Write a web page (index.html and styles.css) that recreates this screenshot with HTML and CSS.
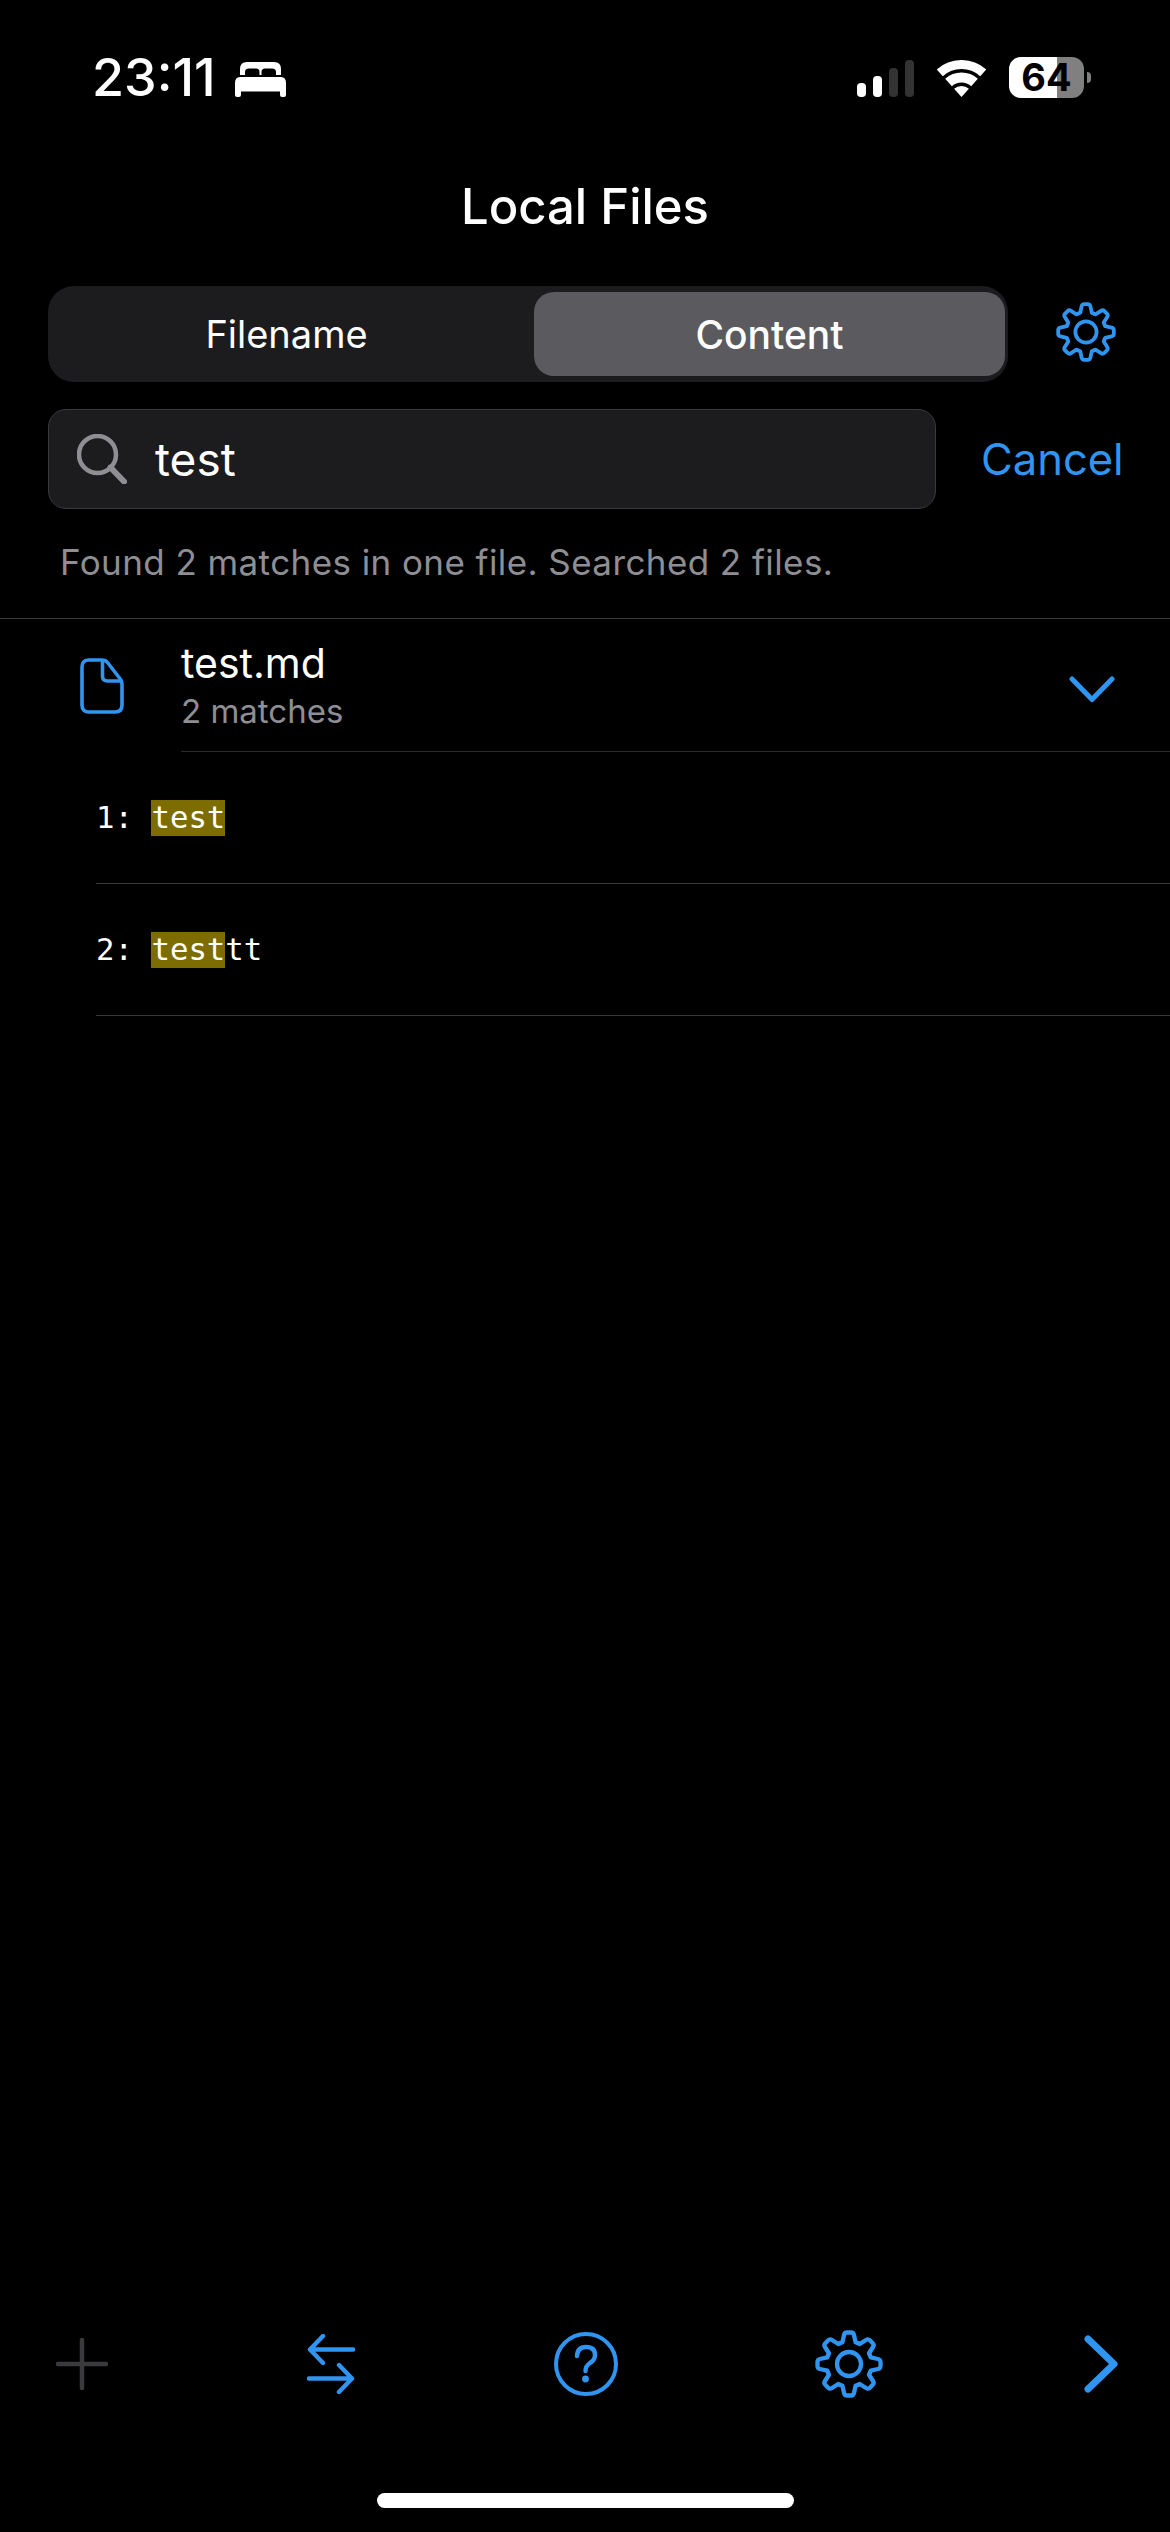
FILE: index.html
```html
<!DOCTYPE html>
<html lang="en">
<head>
  <meta charset="UTF-8">
  <meta name="viewport" content="width=device-width, initial-scale=1.0">
  <title>Local Files</title>
  <link rel="stylesheet" href="styles.css">
</head>
<body>

  <svg class="defs" width="0" height="0">
    <defs>
      <path id="tooth" d="M-7.65-18.48 L-5.8-19.2 L-4.4-25.6 Q-3.9-27.8-1.8-27.8 H1.8 Q3.9-27.8 4.4-25.6 L5.8-19.2 L7.65-18.48"/>
      <symbol id="gear" viewBox="-30 -30 60 60">
        <g fill="none" stroke="#2f95f0" stroke-width="3.8" stroke-linecap="round" stroke-linejoin="round">
          <use href="#tooth"/>
          <use href="#tooth" transform="rotate(45)"/>
          <use href="#tooth" transform="rotate(90)"/>
          <use href="#tooth" transform="rotate(135)"/>
          <use href="#tooth" transform="rotate(180)"/>
          <use href="#tooth" transform="rotate(225)"/>
          <use href="#tooth" transform="rotate(270)"/>
          <use href="#tooth" transform="rotate(315)"/>
          <circle r="10.6"/>
        </g>
      </symbol>
    </defs>
  </svg>

  <div class="page">

    <div class="status-bar">
      <div class="status-left">
        <span class="time">23:11</span>
        <svg class="bed" width="51" height="35" viewBox="0 0 51 35">
          <path fill="#fff" d="M5 13 V7 Q5 0 12 0 H39 Q46 0 46 7 V13 H41 V10 Q41 6.500 37 6.500 H30 Q26.500 6.500 26.500 10 V13 H24.500 V10 Q24.500 6.500 21 6.500 H14 Q10 6.500 10 10 V13 Z"/>
          <path fill="#fff" d="M5 15 H46 Q51 15 51 21 V33 Q51 35 49 35 H47 Q45 35 45 33 V29.500 H6 V33 Q6 35 4 35 H2 Q0 35 0 33 V21 Q0 15 5 15 Z"/>
        </svg>
      </div>
      <div class="status-right">
        <div class="signal">
          <span class="bar bar-1"></span>
          <span class="bar bar-2"></span>
          <span class="bar bar-3 off"></span>
          <span class="bar bar-4 off"></span>
        </div>
        <svg class="wifi" width="49" height="37" viewBox="0 0 49 37">
          <path fill="none" stroke="#fff" stroke-width="9" d="M2.800 12.800 A32.500 32.500 0 0 1 46.200 12.800"/>
          <path fill="none" stroke="#fff" stroke-width="10" d="M11.500 22.500 A19.500 19.500 0 0 1 37.500 22.500"/>
          <path fill="#fff" d="M24.500 37 L17.100 28.800 A11 11 0 0 1 31.900 28.800 Z"/>
        </svg>
        <div class="battery">64</div>
        <span class="battery-nub"></span>
      </div>
    </div>

    <h1 class="title">Local Files</h1>

    <div class="mode-row">
      <div class="segmented">
        <div class="segment">Filename</div>
        <div class="segment active">Content</div>
      </div>
      <svg class="mode-gear" width="60" height="60"><use href="#gear"/></svg>
    </div>

    <div class="search-row">
      <div class="search-field">
        <svg class="search-icon" width="50" height="50" viewBox="0 0 50 50">
          <circle cx="20.500" cy="20.500" r="18.500" fill="none" stroke="#8e8e93" stroke-width="4.500"/>
          <path d="M33.500 33.500 L47 47.500" fill="none" stroke="#8e8e93" stroke-width="6" stroke-linecap="round"/>
        </svg>
        <span class="search-text">test</span>
      </div>
      <span class="cancel">Cancel</span>
    </div>

    <p class="summary">Found 2 matches in one file. Searched 2 files.</p>

    <div class="results">
      <div class="file-row">
        <svg class="file-icon" width="44" height="56" viewBox="0 0 44 56">
          <path fill="none" stroke="#2f95f0" stroke-width="3.600" stroke-linejoin="round" d="M9 2 H22 Q25.500 2 27.500 4.500 L39.500 20 Q42 22.500 42 26 V47 Q42 54 35 54 H9 Q2 54 2 47 V9 Q2 2 9 2 Z"/>
          <path fill="none" stroke="#2f95f0" stroke-width="3.600" stroke-linejoin="round" d="M22.500 2 V18 Q22.500 23 27.500 23 H42"/>
        </svg>
        <div class="file-body">
          <div class="file-text">
            <div class="file-name">test.md</div>
            <div class="file-count">2 matches</div>
          </div>
          <svg class="chevron-down" width="46" height="27" viewBox="0 0 46 27">
            <path fill="none" stroke="#2f95f0" stroke-width="5" stroke-linecap="round" stroke-linejoin="round" d="M3 3 L23 23.500 L43 3"/>
          </svg>
        </div>
      </div>

      <div class="match-row">
        <span class="line-no">1: </span><span class="hit">test</span>
      </div>
      <div class="match-row">
        <span class="line-no">2: </span><span class="hit">test</span><span>tt</span>
      </div>
    </div>

    <div class="toolbar">
      <svg width="52" height="52" viewBox="0 0 52 52">
        <path fill="none" stroke="#3a3a3c" stroke-width="4.500" stroke-linecap="round" d="M26 2 V50 M2 26 H50"/>
      </svg>
      <svg width="48" height="60" viewBox="0 0 48 60">
        <g fill="none" stroke="#2f95f0" stroke-width="4.400" stroke-linecap="round" stroke-linejoin="round">
          <path d="M46 15.500 H3 M16 2 L3 15.500 L16 29"/>
          <path d="M2 44.500 H45 M32 31 L45 44.500 L32 58"/>
        </g>
      </svg>
      <svg width="64" height="64" viewBox="0 0 64 64">
        <circle cx="32" cy="32" r="30" fill="none" stroke="#2f95f0" stroke-width="4"/>
        <path fill="none" stroke="#2f95f0" stroke-width="4.400" stroke-linecap="round" d="M23 24 Q23.500 15 32 15 Q41 15 41 23 Q41 28 36 31 Q31.500 34 31.500 39"/>
        <circle cx="31.500" cy="47" r="3.400" fill="#2f95f0"/>
      </svg>
      <svg class="toolbar-gear" width="68" height="68"><use href="#gear"/></svg>
      <svg width="34" height="58" viewBox="0 0 34 58">
        <path fill="none" stroke="#2f95f0" stroke-width="7" stroke-linecap="round" stroke-linejoin="round" d="M4 4 L30 29 L4 54"/>
      </svg>
    </div>

    <div class="home-bar"></div>

  </div>

</body>
</html>
```

FILE: styles.css
```css
* {
  box-sizing: border-box;
}

body {
  margin: 0;
  background-color: #000;
  color: #fff;
  font-family: Inter, "Noto Sans", sans-serif;
}

.defs {
  display: block;
  height: 0;
}

.page {
  width: 1170px;
  height: 2532px;
  display: flex;
  flex-direction: column;
  background-color: #000;
  overflow: hidden;
}

/* Barra de status */
.status-bar {
  display: flex;
  justify-content: space-between;
  align-items: center;
  height: 41px;
  margin-top: 57px;
  padding: 0 79px 0 92px;
}

.status-left {
  display: flex;
  align-items: center;
  gap: 19px;
}

.time {
  font-size: 52px;
  font-weight: 500;
  line-height: 41px;
}

.bed {
  margin-top: 3px;
}

.status-right {
  display: flex;
  align-items: center;
}

.signal {
  display: flex;
  align-items: flex-end;
  gap: 6.500px;
  height: 37px;
  margin-top: 1px;
}

.bar {
  width: 9.500px;
  border-radius: 4px;
  background-color: #fff;
}

.bar.off {
  background-color: #333;
}

.bar-1 { height: 14px; }
.bar-2 { height: 21px; }
.bar-3 { height: 29px; }
.bar-4 { height: 37px; }

.wifi {
  margin: 1px 0 0 23px;
}

.battery {
  width: 75px;
  height: 41px;
  margin-left: 23px;
  border-radius: 12px;
  background: linear-gradient(90deg, #fff 64%, #808080 64%);
  color: #000;
  font-size: 38px;
  font-weight: 700;
  line-height: 41px;
  text-align: center;
}

.battery-nub {
  width: 4px;
  height: 11px;
  margin-left: 3px;
  border-radius: 0 6px 6px 0;
  background-color: #808080;
}

/* Titulo */
.title {
  margin: 79px 0 0;
  font-size: 49px;
  font-weight: 500;
  line-height: 60px;
  text-align: center;
}

/* Filename / Content */
.mode-row {
  display: flex;
  align-items: flex-start;
  margin-top: 49px;
  padding-left: 48px;
}

.segmented {
  display: flex;
  width: 960px;
  height: 96px;
  padding: 6px 3px 6px 0;
  border-radius: 26px;
  background-color: #1c1c1e;
}

.segment {
  display: flex;
  flex: 1;
  align-items: center;
  justify-content: center;
  padding-right: 9px;
  font-size: 38px;
  border-radius: 20px;
}

.segment.active {
  flex: 0 0 471px;
  padding-right: 0;
  background-color: #5b5b5f;
  font-size: 39px;
  font-weight: 500;
}

.mode-gear {
  margin: 16px 0 0 48px;
}

/* Busca */
.search-row {
  display: flex;
  align-items: center;
  margin-top: 27px;
  padding-left: 48px;
}

.search-field {
  display: flex;
  align-items: center;
  width: 888px;
  height: 100px;
  padding-left: 28px;
  border: 1px solid #3a3a3c;
  border-radius: 18px;
  background-color: #1c1c1e;
}

.search-text {
  margin-left: 28px;
  font-size: 46px;
}

.cancel {
  margin-left: 45px;
  color: #2f95f0;
  font-size: 43.500px;
}

.summary {
  height: 46px;
  margin: 30px 0 0;
  padding-left: 60px;
  color: #8e8e93;
  font-size: 35px;
  letter-spacing: 0.420px;
  line-height: 46px;
}

/* Resultados */
.results {
  margin-top: 33px;
  border-top: 1px solid #38383a;
}

.file-row {
  display: flex;
  align-items: flex-start;
  padding-left: 80px;
}

.file-icon {
  margin-top: 39px;
}

.file-body {
  display: flex;
  flex: 1;
  justify-content: space-between;
  align-items: center;
  height: 133px;
  margin-left: 57px;
  padding-right: 55px;
  border-bottom: 1px solid #2c2c2e;
}

.file-name {
  font-size: 41px;
  line-height: 50px;
}

.file-count {
  margin-top: 1px;
  color: #8e8e93;
  font-size: 33px;
  line-height: 44px;
}

.chevron-down {
  margin-top: 8px;
}

.match-row {
  display: flex;
  align-items: center;
  height: 132px;
  margin-left: 96px;
  border-bottom: 1px solid #38383a;
  font-family: "DejaVu Sans Mono", "Liberation Mono", monospace;
  font-size: 30.700px;
  white-space: pre;
}

.hit {
  display: inline-block;
  height: 36px;
  line-height: 36px;
  background-color: #7d6c00;
}

/* Barra inferior */
.toolbar {
  display: flex;
  justify-content: space-between;
  align-items: center;
  height: 70px;
  margin-top: auto;
  padding: 0 52px 0 56px;
}

.toolbar-gear {
  margin: 0 2px 0 -2px;
}

.home-bar {
  width: 417px;
  height: 15px;
  margin: 94px auto 24px;
  border-radius: 8px;
  background-color: #fff;
}
```
